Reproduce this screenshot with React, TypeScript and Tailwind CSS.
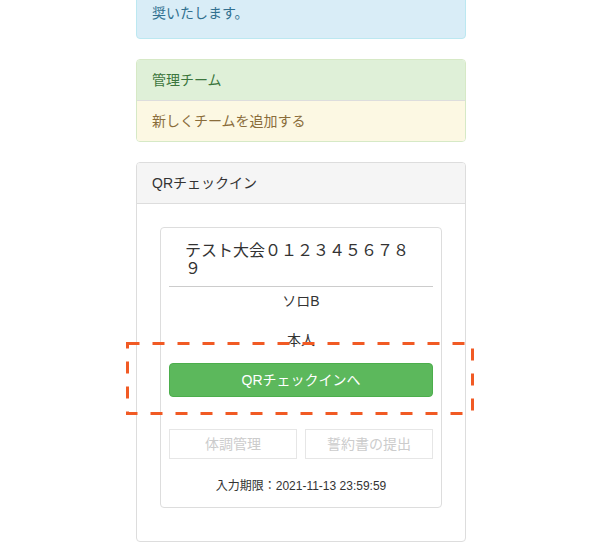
import React from "react"

const font = { fontFamily: '"Liberation Sans", "Noto Sans CJK JP", sans-serif' }

export default function App() {
  return (
    <div className="relative w-[600px] h-[550px] overflow-hidden bg-white text-[14px] leading-[20px] text-[#333]" style={font}>
      <div className="flex justify-center pl-[2px]">
        <div className="w-[330px]">
          {/* info alert, top scrolled out of view */}
          <div className="-mt-[13px] border border-[#bce8f1] bg-[#d9edf7] text-[#31708f] rounded-[4px] px-[15px] py-[15px]">
            奨いたします。
          </div>

          {/* team panel */}
          <div className="mt-[20px] border border-[#d6e9c6] rounded-[4px] overflow-hidden">
            <div className="bg-[#dff0d8] text-[#3c763d] px-[15px] py-[10px] border-b border-[#ddd]">管理チーム</div>
            <div className="bg-[#fcf8e3] text-[#8a6d3b] px-[15px] py-[10px]">新しくチームを追加する</div>
          </div>

          {/* QR check-in panel */}
          <div className="mt-[20px] border border-[#ddd] rounded-[4px] overflow-hidden">
            <div className="bg-[#f5f5f5] px-[15px] py-[10px] border-b border-[#ddd]">QRチェックイン</div>
            <div className="px-[23px] pt-[23px] pb-[33px]">
              <div className="border border-[#ddd] rounded-[4px] p-2">
                <div className="px-4 pt-[6px] pb-[9px] border-b border-[#ccc] text-[16px] leading-[1.1]">
                  テスト大会０１２３４５６７８９
                </div>
                <p className="mt-1 text-center">ソロB</p>
                <p className="mt-[19px] text-center">本人</p>
                <button className="mt-[13px] w-full h-[34px] rounded-[4px] bg-[#5cb85c] border border-[#4cae4c] text-white">
                  QRチェックインへ
                </button>
                <div className="mt-[32px] grid grid-cols-2 gap-2">
                  <button className="h-[30px] border border-[#e6e6e6] text-[#cccccc] bg-white">体調管理</button>
                  <button className="h-[30px] border border-[#e6e6e6] text-[#cccccc] bg-white">誓約書の提出</button>
                </div>
                <p className="mt-[19px] mb-[4px] text-center text-[12px] leading-[17px]">入力期限：2021-11-13 23:59:59</p>
              </div>
            </div>
          </div>
        </div>
      </div>

      {/* highlight annotation */}
      <svg className="absolute left-[126px] top-[342px]" width="348" height="73" viewBox="0 0 348 73">
        <rect x="1.5" y="1.5" width="345" height="70" fill="none" stroke="#f15a24" strokeWidth="3" strokeDasharray="12 13" />
      </svg>
    </div>
  )
}
